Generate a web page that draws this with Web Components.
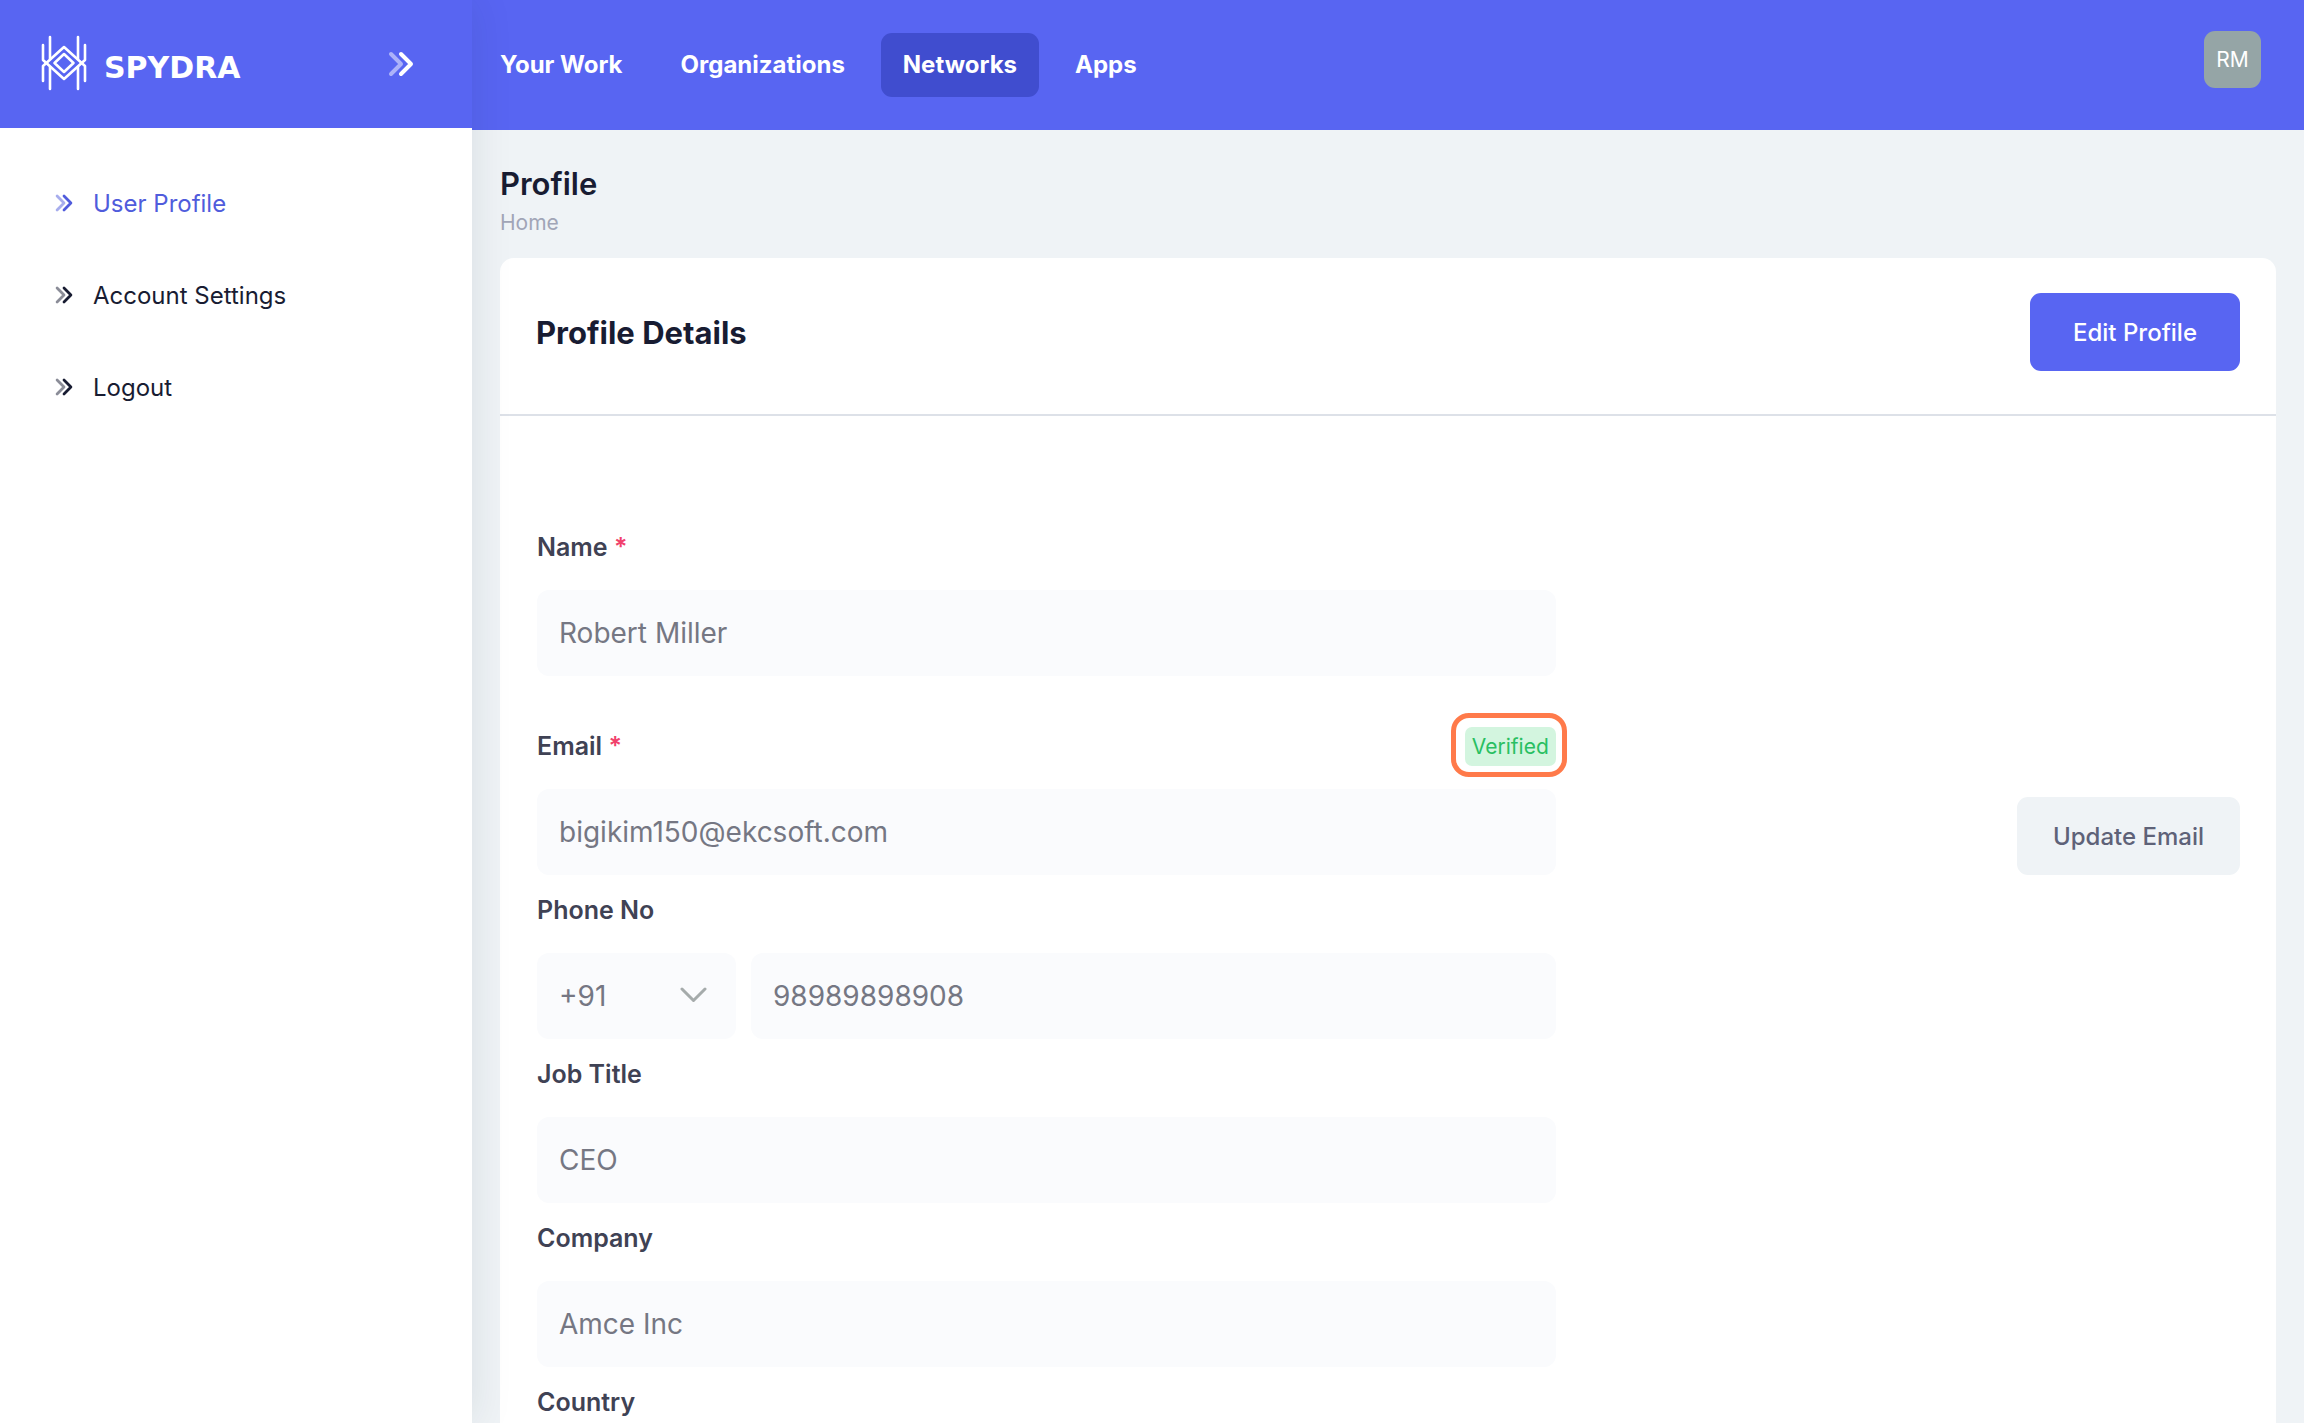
<!DOCTYPE html>
<html lang="en">
<head>
<meta charset="utf-8">
<meta name="viewport" content="width=device-width, initial-scale=1">
<title>Spydra - Profile</title>
<style>
  body {
    --primary: #5865f2;
    --dark: #181c32;
    --field: #fafbfd;
    --page: #eff3f6;
    margin: 0;
    font-family: Inter, "Liberation Sans", sans-serif;
    font-size: 24px;
    color: var(--dark);
    background: var(--page);
  }
</style>
</head>
<body>
  <app-shell>
    <side-bar slot="aside">
      <side-link active>User Profile</side-link>
      <side-link>Account Settings</side-link>
      <side-link>Logout</side-link>
    </side-bar>
    <top-bar slot="header" initials="RM">
      <nav-link>Your Work</nav-link>
      <nav-link>Organizations</nav-link>
      <nav-link active>Networks</nav-link>
      <nav-link>Apps</nav-link>
    </top-bar>
    <page-title heading="Profile" crumb="Home"></page-title>
    <profile-card heading="Profile Details">
      <app-button slot="action">Edit Profile</app-button>
      <form-row>
        <text-field label="Name" value="Robert Miller" required></text-field>
      </form-row>
      <form-row spaced>
        <text-field label="Email" type="email" value="bigikim150@ekcsoft.com" required>
          <status-badge slot="badge">Verified</status-badge>
        </text-field>
        <app-button slot="action" light>Update Email</app-button>
      </form-row>
      <form-row>
        <phone-field label="Phone No" code="+91" value="98989898908"></phone-field>
      </form-row>
      <form-row>
        <text-field label="Job Title" value="CEO"></text-field>
      </form-row>
      <form-row>
        <text-field label="Company" value="Amce Inc"></text-field>
      </form-row>
      <form-row>
        <text-field label="Country" value=""></text-field>
      </form-row>
    </profile-card>
  </app-shell>

<script>
const arrows = `
  <svg viewBox="0 0 26 26" fill="none" stroke="currentColor" stroke-width="4" stroke-linecap="round" stroke-linejoin="round" aria-hidden="true">
    <path d="M3 3l10 10-10 10" opacity=".5"/>
    <path d="M13 3l10 10-10 10"/>
  </svg>`;

const fieldStyles = `
  :host {
    display: block;
  }
  .top {
    display: flex;
    align-items: center;
    justify-content: space-between;
    height: 38px;
    margin-bottom: 24px;
  }
  label {
    font-size: 25px;
    font-weight: 600;
    line-height: 38px;
    color: #3f4254;
  }
  .required::after {
    content: " *";
    color: #f1416c;
  }
  input, select {
    box-sizing: border-box;
    width: 100%;
    height: 86px;
    padding: 0 22px;
    border: 0;
    border-radius: 12px;
    outline: 0;
    appearance: none;
    background: var(--field);
    color: #757783;
    font-family: inherit;
    font-size: 28px;
    opacity: 1;
  }
`;

class BaseElement extends HTMLElement {
  constructor() {
    super();
    this.attachShadow({ mode: 'open' });
  }
  connectedCallback() {
    const template = document.createElement('template');
    template.innerHTML = `<style>${this.getStyles()}</style>${this.getTemplate()}`;
    this.shadowRoot.replaceChildren(template.content.cloneNode(true));
  }
  attr(name) {
    return this.getAttribute(name) || '';
  }
}

class AppShell extends BaseElement {
  getStyles() {
    return `
      :host {
        display: grid;
        grid-template-columns: 472px minmax(0, 1fr);
        height: 100vh;
        overflow: hidden;
      }
      .wrapper {
        display: flex;
        flex-direction: column;
        min-height: 0;
      }
      main {
        flex: 1;
        min-height: 0;
        padding: 34px 28px 0;
        overflow-y: auto;
        scrollbar-width: none;
      }
    `;
  }
  getTemplate() {
    return `
      <slot name="aside"></slot>
      <div class="wrapper">
        <slot name="header"></slot>
        <main><slot></slot></main>
      </div>
    `;
  }
}

class SideBar extends BaseElement {
  getStyles() {
    return `
      :host {
        display: flex;
        flex-direction: column;
        z-index: 1;
        background: #fff;
        box-shadow: 0 0 40px rgba(24, 40, 50, 0.1);
      }
      .brand {
        display: flex;
        align-items: center;
        justify-content: space-between;
        height: 128px;
        padding: 0 58px 0 40px;
        box-sizing: border-box;
        color: #fff;
        background: var(--primary);
      }
      .logo {
        display: flex;
        align-items: center;
        gap: 16px;
        color: inherit;
        text-decoration: none;
        font: bold 30px/36px "DejaVu Sans", sans-serif;
        padding-top: 8px;
      }
      .logo svg {
        width: 48px;
        height: 56px;
        margin-top: -10px;
      }
      button {
        display: flex;
        padding: 0;
        border: 0;
        color: inherit;
        background: none;
      }
      button svg {
        width: 26px;
        height: 26px;
      }
      nav {
        display: flex;
        flex-direction: column;
        gap: 36px;
        padding: 47px 55px;
      }
    `;
  }
  getTemplate() {
    return `
      <div class="brand">
        <a class="logo" href="#">
          <svg viewBox="0 0 48 56" fill="none" stroke="#fff" stroke-width="2.600" stroke-linecap="round" stroke-linejoin="round" aria-hidden="true">
            <path d="M10 2v22M38 2v22M10 32v22M38 32v22"/>
            <path d="M3 10v15l21 19 21-19V10"/>
            <path d="M3 46V31l21-19 21 19v15"/>
            <path d="M24 19l-9.500 9 9.500 9 9.500-9z"/>
          </svg>
          SPYDRA
        </a>
        <button type="button" aria-label="Toggle sidebar">${arrows}</button>
      </div>
      <nav><slot></slot></nav>
    `;
  }
}

class SideLink extends BaseElement {
  getStyles() {
    return `
      :host {
        display: block;
      }
      a {
        display: flex;
        align-items: center;
        gap: 20px;
        height: 56px;
        color: var(--dark);
        font-weight: 400;
        text-decoration: none;
      }
      :host([active]) a {
        color: #505cdc;
      }
      svg {
        width: 18px;
        height: 18px;
      }
    `;
  }
  getTemplate() {
    return `<a href="#">${arrows}<slot></slot></a>`;
  }
}

class TopBar extends BaseElement {
  getStyles() {
    return `
      :host {
        display: flex;
        flex: none;
        align-items: center;
        justify-content: space-between;
        height: 130px;
        padding: 0 43px 0 6px;
        background: var(--primary);
      }
      nav {
        display: flex;
        gap: 14px;
      }
      button {
        width: 57px;
        height: 57px;
        margin-bottom: 11px;
        padding: 0;
        border: 0;
        border-radius: 11px;
        background: #95a5a6;
        color: #fff;
        font-family: inherit;
        font-size: 21px;
        font-weight: 400;
      }
    `;
  }
  getTemplate() {
    return `
      <nav><slot></slot></nav>
      <button type="button">${this.attr('initials')}</button>
    `;
  }
}

class NavLink extends BaseElement {
  getStyles() {
    return `
      :host {
        display: block;
      }
      a {
        display: block;
        padding: 0 22px;
        border-radius: 11px;
        color: #fff;
        font-weight: 700;
        line-height: 64px;
        text-decoration: none;
      }
      :host([active]) a {
        background: #404dcf;
      }
    `;
  }
  getTemplate() {
    return `<a href="#"><slot></slot></a>`;
  }
}

class PageTitle extends BaseElement {
  getStyles() {
    return `
      :host {
        display: block;
        margin-bottom: 20px;
      }
      h1 {
        margin: 0;
        font-size: 31px;
        font-weight: 600;
        line-height: 40px;
      }
      a {
        display: block;
        width: max-content;
        margin-top: 4px;
        color: #a1a5b7;
        font-size: 21px;
        line-height: 30px;
        text-decoration: none;
      }
    `;
  }
  getTemplate() {
    return `
      <h1>${this.attr('heading')}</h1>
      <a href="#">${this.attr('crumb')}</a>
    `;
  }
}

class ProfileCard extends BaseElement {
  getStyles() {
    return `
      :host {
        display: block;
        border-radius: 14px;
        background: #fff;
      }
      header {
        display: flex;
        align-items: flex-start;
        justify-content: space-between;
        height: 158px;
        padding: 35px 36px 0;
        box-sizing: border-box;
        border-bottom: 2px solid #dde1e8;
      }
      h2 {
        margin: 0;
        font-size: 31px;
        font-weight: 700;
        line-height: 80px;
      }
      form {
        padding: 96px 36px 36px 37px;
      }
    `;
  }
  getTemplate() {
    return `
      <header>
        <h2>${this.attr('heading')}</h2>
        <slot name="action"></slot>
      </header>
      <form><slot></slot></form>
    `;
  }
}

class FormRow extends BaseElement {
  getStyles() {
    return `
      :host {
        display: grid;
        grid-template-columns: 3fr 2fr;
        column-gap: 5px;
        padding-top: 16px;
      }
      :host([spaced]) {
        padding-top: 51px;
      }
      .action {
        display: flex;
        align-items: flex-end;
        justify-content: flex-end;
      }
    `;
  }
  getTemplate() {
    return `
      <slot></slot>
      <div class="action"><slot name="action"></slot></div>
    `;
  }
}

class AppButton extends BaseElement {
  getStyles() {
    return `
      :host {
        display: block;
      }
      button {
        height: 78px;
        padding: 0 43px;
        border: 0;
        border-radius: 11px;
        background: var(--primary);
        color: #fff;
        font-family: inherit;
        font-size: 24px;
        font-weight: 500;
      }
      :host([light]) button {
        padding: 0 36px;
        background: var(--page);
        color: #5e6278;
      }
    `;
  }
  getTemplate() {
    return `<button type="button"><slot></slot></button>`;
  }
}

class StatusBadge extends BaseElement {
  getStyles() {
    return `
      :host {
        position: relative;
        display: block;
        padding: 0 7px;
        border-radius: 7px;
        background: #d3f5df;
        color: #29bf62;
        font-size: 21px;
        line-height: 39px;
      }
      /* highlight ring drawn over the badge */
      :host::after {
        content: "";
        position: absolute;
        inset: -14px -11px -11px -14px;
        border: 5px solid #ff7a4a;
        border-radius: 18px;
      }
    `;
  }
  getTemplate() {
    return `<slot></slot>`;
  }
}

class TextField extends BaseElement {
  getStyles() {
    return fieldStyles;
  }
  getTemplate() {
    const required = this.hasAttribute('required') ? 'required' : '';
    return `
      <div class="top">
        <label class="${required}" for="field">${this.attr('label')}</label>
        <slot name="badge"></slot>
      </div>
      <input id="field" type="${this.attr('type') || 'text'}" value="${this.attr('value')}" readonly ${required}>
    `;
  }
}

class PhoneField extends BaseElement {
  getStyles() {
    return `
      ${fieldStyles}
      .group {
        display: grid;
        grid-template-columns: 199px 1fr;
        gap: 15px;
      }
      .code {
        position: relative;
      }
      .code svg {
        position: absolute;
        top: 34px;
        right: 29px;
        width: 27px;
        height: 17px;
        pointer-events: none;
      }
    `;
  }
  getTemplate() {
    return `
      <div class="top">
        <label for="phone">${this.attr('label')}</label>
      </div>
      <div class="group">
        <div class="code">
          <select aria-label="Country code"><option>${this.attr('code')}</option></select>
          <svg viewBox="0 0 27 17" fill="none" stroke="#a5abab" stroke-width="3" stroke-linecap="round" stroke-linejoin="round" aria-hidden="true">
            <path d="M2 2l11.500 11.500L25 2"/>
          </svg>
        </div>
        <input id="phone" type="tel" value="${this.attr('value')}" readonly>
      </div>
    `;
  }
}

customElements.define('app-shell', AppShell);
customElements.define('side-bar', SideBar);
customElements.define('side-link', SideLink);
customElements.define('top-bar', TopBar);
customElements.define('nav-link', NavLink);
customElements.define('page-title', PageTitle);
customElements.define('profile-card', ProfileCard);
customElements.define('form-row', FormRow);
customElements.define('app-button', AppButton);
customElements.define('status-badge', StatusBadge);
customElements.define('text-field', TextField);
customElements.define('phone-field', PhoneField);
</script>
</body>
</html>
